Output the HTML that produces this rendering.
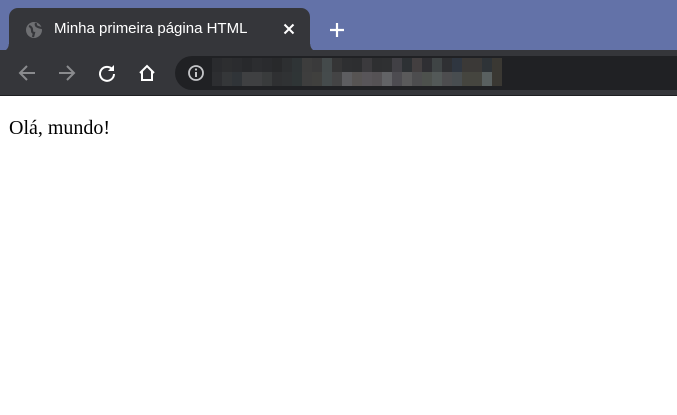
<!DOCTYPE html>
<html><head><style>
*{margin:0;padding:0;box-sizing:border-box}
body{width:677px;height:415px;background:#fff;position:relative;overflow:hidden;font-family:"Liberation Sans",sans-serif}
.top{position:absolute;left:0;top:0;width:677px;height:50px;background:#6372a8}
.tab{position:absolute;left:9px;top:8px;width:301px;height:44px;background:#35363a;border-radius:9px 9px 0 0}
.tab:before,.tab:after{content:"";position:absolute;bottom:0;width:8px;height:8px}
.tab:before{left:-8px;background:radial-gradient(circle at 0 0,transparent 7.5px,#35363a 8px)}
.tab:after{right:-8px;background:radial-gradient(circle at 100% 0,transparent 7.5px,#35363a 8px)}
.title{position:absolute;left:54px;top:20px;color:#fff;font-size:15px}
.bar{position:absolute;left:0;top:50px;width:677px;height:46px;background:#35363a;border-bottom:1px solid #1e1f22}
.omni{position:absolute;left:175px;top:56px;width:520px;height:34px;background:#202124;border-radius:17px}
.row{position:absolute;left:212px;display:flex}
.row div{width:10px;height:14px}
p{position:absolute;left:9px;top:117px;font-family:"Liberation Serif",serif;font-size:20px;color:#000}
</style></head><body>
<div class="top"></div>
<div class="tab"></div>
<svg style="position:absolute;left:25px;top:21px" width="18" height="18" viewBox="0 0 18 18"><circle cx="9" cy="9" r="8" fill="#6e6f72"/><path d="M4 5q3 1 3 4t2 3l-1 4M11 2q-1 3 2 4t4 1" stroke="#35363a" stroke-width="2.2" fill="none"/></svg>
<div class="title">Minha primeira página HTML</div>
<svg style="position:absolute;left:283px;top:23px" width="12" height="12"><path d="M1.5 1.5L10.5 10.5M10.5 1.5L1.5 10.5" stroke="#fff" stroke-width="2"/></svg>
<svg style="position:absolute;left:329px;top:22px" width="16" height="16"><path d="M8 1V15M1 8H15" stroke="#fff" stroke-width="2.2"/></svg>
<div class="bar"></div>
<svg style="position:absolute;left:17px;top:63px" width="20" height="20"><path d="M18 10H3M10 3L3 10L10 17" stroke="#8a8b8e" stroke-width="2" fill="none"/></svg>
<svg style="position:absolute;left:57px;top:63px" width="20" height="20"><path d="M2 10H17M10 3L17 10L10 17" stroke="#8a8b8e" stroke-width="2" fill="none"/></svg>
<svg style="position:absolute;left:97px;top:63px" width="20" height="20"><path d="M15.5 6.5A7 7 0 1 0 17 11" stroke="#fff" stroke-width="2" fill="none"/><path d="M17 2V8H11Z" fill="#fff"/></svg>
<svg style="position:absolute;left:137px;top:63px" width="20" height="20"><path d="M3 10L10 3L17 10M5 8V17H15V8" stroke="#fff" stroke-width="2" fill="none"/></svg>
<div class="omni"></div>
<svg style="position:absolute;left:187px;top:64px" width="18" height="18"><circle cx="9" cy="9" r="7" stroke="#c4c5c8" stroke-width="1.8" fill="none"/><path d="M9 8V13" stroke="#c4c5c8" stroke-width="2"/><circle cx="9" cy="5.5" r="1.1" fill="#c4c5c8"/></svg>
<div class="row" style="top:58px">
<div style="background:#2a2b2e"></div><div style="background:#2d2e30"></div><div style="background:#2b2c2f"></div><div style="background:#28292c"></div><div style="background:#2c2d30"></div><div style="background:#2a2b2e"></div><div style="background:#28292b"></div><div style="background:#2d2f31"></div><div style="background:#2f3436"></div><div style="background:#3d3d3d"></div><div style="background:#3a3a3b"></div><div style="background:#444a4b"></div><div style="background:#353536"></div><div style="background:#2e2f31"></div><div style="background:#2d2e30"></div><div style="background:#3b3a3d"></div><div style="background:#2e2f31"></div><div style="background:#2f3032"></div><div style="background:#414045"></div><div style="background:#2d3134"></div><div style="background:#433f40"></div><div style="background:#2f2f33"></div><div style="background:#3f4445"></div><div style="background:#2f3033"></div><div style="background:#2f3640"></div><div style="background:#3b3937"></div><div style="background:#3b3937"></div><div style="background:#2e3337"></div><div style="background:#3a3833"></div>
</div>
<div class="row" style="top:72px">
<div style="background:#2d2e31"></div><div style="background:#353739"></div><div style="background:#303438"></div><div style="background:#3f4042"></div><div style="background:#3f4042"></div><div style="background:#393b3c"></div><div style="background:#2f3032"></div><div style="background:#303234"></div><div style="background:#2f3536"></div><div style="background:#3e3e3e"></div><div style="background:#40403e"></div><div style="background:#454b4c"></div><div style="background:#444445"></div><div style="background:#5d5d60"></div><div style="background:#575453"></div><div style="background:#585559"></div><div style="background:#555255"></div><div style="background:#626366"></div><div style="background:#4d4c51"></div><div style="background:#5a5a5b"></div><div style="background:#4d4d4f"></div><div style="background:#4d514d"></div><div style="background:#535958"></div><div style="background:#4d4d4f"></div><div style="background:#484d50"></div><div style="background:#45453f"></div><div style="background:#45453f"></div><div style="background:#596060"></div><div style="background:#3a3833"></div>
</div>
<p>Olá, mundo!</p>
</body></html>
